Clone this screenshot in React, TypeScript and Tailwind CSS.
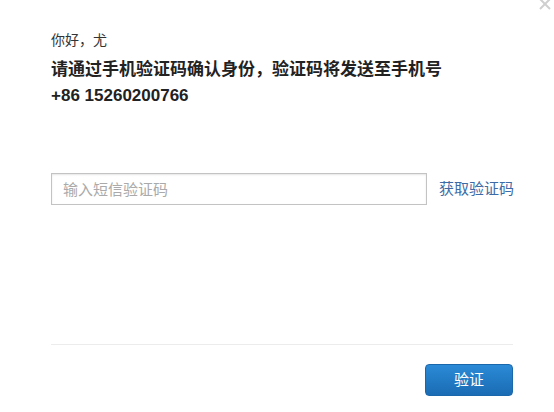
import * as React from "react";

const FONT = '"Liberation Sans", "Noto Sans CJK SC", sans-serif';

export default function App() {
  const [code, setCode] = React.useState("");

  return (
    <div
      className="relative h-[412px] w-[554px] overflow-hidden bg-white text-[#333]"
      style={{ fontFamily: FONT }}
    >
      {/* close */}
      <button
        type="button"
        className="absolute right-[2px] top-[-3px] flex h-[14px] w-[14px] items-center justify-center text-[#cfcfcf]"
      >
        <svg viewBox="0 0 12 12" className="h-[12px] w-[12px]">
          <path d="M1 1 L11 11 M11 1 L1 11" stroke="currentColor" strokeWidth="2" />
        </svg>
      </button>

      <div className="pl-[51px] pr-[41px] pt-[30px]">
        <p className="text-[14px] leading-[20px] text-[#333]">你好，尤</p>
        <p className="mt-[8px] text-[17px] font-bold leading-[24px] text-[#222]">
          请通过手机验证码确认身份，验证码将发送至手机号
        </p>
        <p className="mt-[2px] text-[17px] font-bold leading-[24px] text-[#222]">+86 15260200766</p>

        <div className="mt-[65px] flex items-center">
          <input
            value={code}
            onChange={(e) => setCode(e.target.value)}
            placeholder="输入短信验证码"
            className="h-[32px] w-[376px] shrink-0 border border-[#c3c3c3] px-[11px] text-[15px] text-[#333] shadow-[inset_0_1px_2px_rgba(0,0,0,0.1)] outline-none placeholder:text-[#aaa]"
          />
          <a className="ml-[12px] cursor-pointer whitespace-nowrap text-[15px] text-[#3d6ba6]">获取验证码</a>
        </div>

        <div className="mt-[139px] h-px w-full bg-[#ececec]" />

        <div className="mt-[19px] flex justify-end">
          <button
            type="button"
            className="h-[32px] w-[88px] rounded-[4px] border border-[#1b67ab] bg-gradient-to-b from-[#2b8ad6] to-[#1a6cb4] text-[15px] text-white"
          >
            验证
          </button>
        </div>
      </div>
    </div>
  );
}
